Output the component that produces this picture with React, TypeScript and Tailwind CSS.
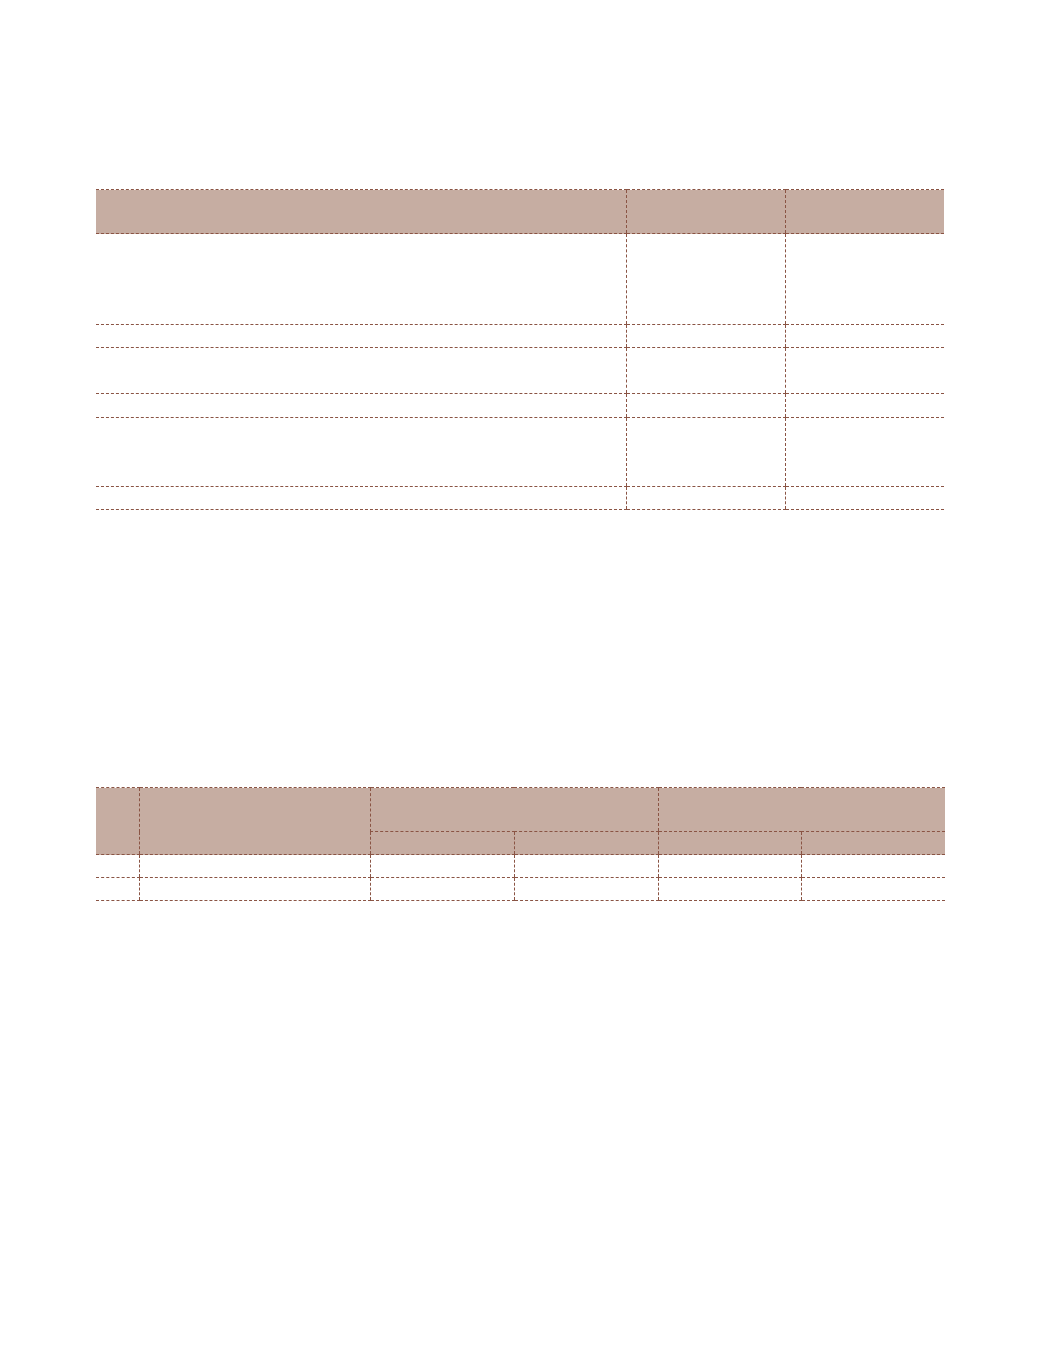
import React from "react";

const B = "border-[#8a5444]";

export default function App() {
  const hc = `bg-[#c6ada2] border-t border-b border-dashed ${B}`;
  const bc = `border-b border-dashed ${B}`;
  const l = `border-l border-dashed ${B}`;
  const rows1 = [91, 23, 46, 24, 69, 23];
  return (
    <div className="w-[1039px] min-h-[1353px] bg-white pt-[189px] pl-[96px] font-['Liberation_Sans',sans-serif]">
      <table className="border-collapse table-fixed w-[848px]">
        <colgroup>
          <col className="w-[530px]" />
          <col className="w-[159px]" />
          <col className="w-[159px]" />
        </colgroup>
        <thead>
          <tr className="h-[44px]">
            <th className={hc}></th>
            <th className={`${hc} ${l}`}></th>
            <th className={`${hc} ${l}`}></th>
          </tr>
        </thead>
        <tbody>
          {rows1.map((h, i) => (
            <tr key={i} style={{ height: h }}>
              <td className={bc}></td>
              <td className={`${bc} ${l}`}></td>
              <td className={`${bc} ${l}`}></td>
            </tr>
          ))}
        </tbody>
      </table>

      <table className="border-collapse table-fixed w-[849px] mt-[277px]">
        <colgroup>
          <col className="w-[43px]" />
          <col className="w-[231px]" />
          <col className="w-[144px]" />
          <col className="w-[144px]" />
          <col className="w-[143px]" />
          <col className="w-[144px]" />
        </colgroup>
        <thead>
          <tr className="h-[44px]">
            <th rowSpan={2} className={hc}></th>
            <th rowSpan={2} className={`${hc} ${l}`}></th>
            <th colSpan={2} className={`${hc} ${l}`}></th>
            <th colSpan={2} className={`${hc} ${l}`}></th>
          </tr>
          <tr className="h-[23px]">
            <th className={`${hc} ${l}`}></th>
            <th className={`${hc} ${l}`}></th>
            <th className={`${hc} ${l}`}></th>
            <th className={`${hc} ${l}`}></th>
          </tr>
        </thead>
        <tbody>
          {[23, 23].map((h, i) => (
            <tr key={i} style={{ height: h }}>
              <td className={bc}></td>
              <td className={`${bc} ${l}`}></td>
              <td className={`${bc} ${l}`}></td>
              <td className={`${bc} ${l}`}></td>
              <td className={`${bc} ${l}`}></td>
              <td className={`${bc} ${l}`}></td>
            </tr>
          ))}
        </tbody>
      </table>
    </div>
  );
}
